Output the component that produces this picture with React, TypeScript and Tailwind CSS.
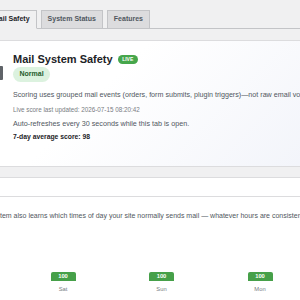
import React from "react";

const days = [
  { d: "Sat", v: 100 },
  { d: "Sun", v: 100 },
  { d: "Mon", v: 100 },
];

export default function App() {
  return (
    <div
      className="w-[300px] h-[300px] overflow-hidden bg-[#f0f0f1] text-[#1d2327]"
      style={{ fontFamily: '"Liberation Sans", Arial, sans-serif' }}
    >
      {/* Tabs */}
      <div className="pt-[10px] border-b border-[#c3c4c7] flex gap-[4px] -ml-[14px] w-[320px]">
        <div className="h-[19px] -mb-px flex items-center px-[6px] border border-[#c3c4c7] border-b-[#f0f0f1] bg-[#f0f0f1] text-[7px] font-bold text-[#1d2327]">
          Mail Safety
        </div>
        <div className="h-[19px] -mb-px flex items-center px-[6px] border border-[#c3c4c7] bg-[#dcdcde] text-[7px] font-bold text-[#50575e]">
          System Status
        </div>
        <div className="h-[19px] -mb-px flex items-center px-[6px] border border-[#c3c4c7] bg-[#dcdcde] text-[7px] font-bold text-[#50575e]">
          Features
        </div>
      </div>

      {/* Card 1 */}
      <div className="mt-[11px] -ml-[10px] w-[330px] border border-[#dcdcde] bg-[linear-gradient(135deg,#ffffff_35%,#f2f4fa)] pt-[11px] pb-[24px] pl-[7px] flex gap-[10px]">
        <div className="mt-[14px] w-[5px] h-[14px] rounded-[1px] bg-[#5f6368]" />
        <div className="flex flex-col items-start">
          <div className="flex items-center gap-[5px] h-[14px]">
            <span className="text-[11px] leading-[14px] font-bold text-[#1d2327]">Mail System Safety</span>
            <span className="h-[9px] px-[4.5px] rounded-full bg-[#46a64b] text-white text-[5px] leading-[9px] font-bold">
              LIVE
            </span>
          </div>
          <div className="mt-[1px] h-[15px] inline-flex items-center px-[6.5px] rounded-full bg-[#dcf2df] text-[#1f5c2b] text-[7px] font-bold">
            Normal
          </div>
          <p className="mt-[7.5px] text-[7.15px] leading-[10px] text-[#50575e] whitespace-nowrap">
            Scoring uses grouped mail events (orders, form submits, plugin triggers)—not raw email volume.
          </p>
          <p className="mt-[5.5px] text-[6.3px] leading-[10px] text-[#787c82] whitespace-nowrap">
            Live score last updated: 2026-07-15 08:20:42
          </p>
          <p className="mt-[4px] text-[7.2px] leading-[10px] text-[#50575e] whitespace-nowrap">
            Auto-refreshes every 30 seconds while this tab is open.
          </p>
          <p className="mt-[3px] text-[6.8px] leading-[10px] font-bold text-[#1d2327] whitespace-nowrap">
            7-day average score: 98
          </p>
        </div>
      </div>

      {/* Card 2 */}
      <div className="mt-[10px] -ml-[10px] w-[330px] border border-[#dcdcde] bg-white">
        <div className="h-[19px] border-b border-[#dcdcde]" />
        <p className="mt-[14px] -ml-[15.5px] text-[7px] leading-[10px] text-[#50575e] whitespace-nowrap">
          The system also learns which times of day your site normally sends mail — whatever hours are consistent become its baseline.
        </p>
        <div className="mt-[51px] pl-[22.75px] flex items-end">
          {days.map((x) => (
            <div key={x.d} className="w-[98.5px] flex flex-col items-center">
              <div className="w-[25px] h-[9px] rounded-t-[2px] bg-[#46a049] text-white text-[5.8px] font-bold leading-[9px] text-center">
                {x.v}
              </div>
              <div className="mt-[4px] text-[5.8px] leading-[8px] text-[#787c82]">{x.d}</div>
            </div>
          ))}
        </div>
        <div className="h-[20px]" />
      </div>
    </div>
  );
}
